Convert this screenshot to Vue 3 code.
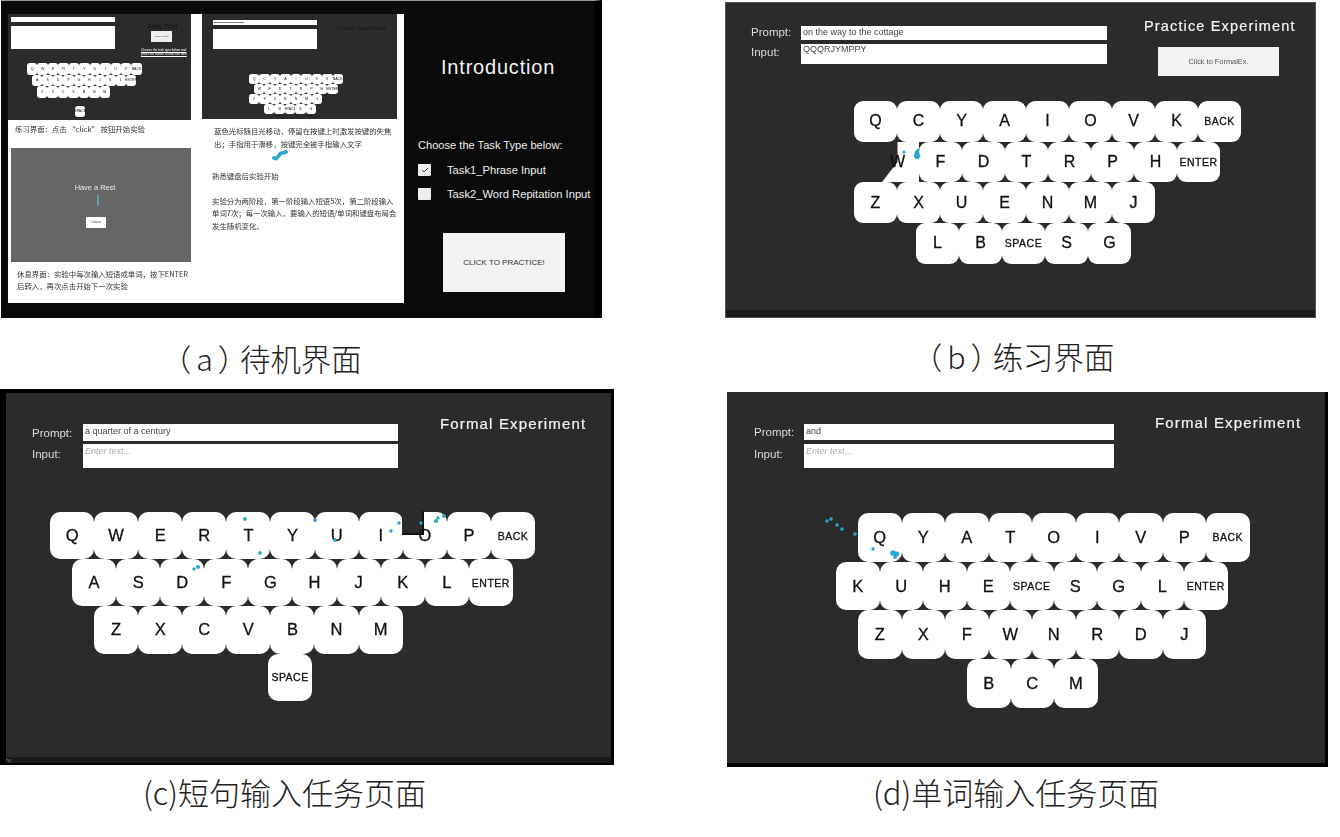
<template>
  <main class="figure">
    <!-- (a) standby screen: a slide with thumbnails next to the task picker -->
    <section class="cell cell-a">
      <div class="intro">
        <div class="doc">
          <div class="doc-left">
            <div class="mini mini-one">
              <div class="mini-head">
                <div class="mini-form">
                  <div class="mini-bar"></div>
                  <div class="mini-bar tall"></div>
                </div>
                <div class="mini-side">
                  <div class="mini-title">New Trial</div>
                  <div class="mini-btn">Click to start</div>
                  <div class="mini-note">Choose the task type below and press the button to start the next</div>
                </div>
              </div>
              <div class="kb kb-mini">
                <div v-for="(row, r) in miniOne" :key="r" class="kb-row" :style="{ marginLeft: row.offset + 'px', marginTop: row.gap + 'px' }">
                  <div v-for="k in row.keys" :key="k" class="key">{{ k }}</div>
                </div>
              </div>
            </div>
            <p class="doc-text first">练习界面：点击 “click” 按钮开始实验</p>
            <div class="rest">
              <div class="rest-title">Have a Rest</div>
              <div class="rest-dash"></div>
              <div class="rest-btn">Continue</div>
            </div>
            <p class="doc-text rest-text">休息界面：实验中每次输入短语或单词，按下ENTER后转入，再次点击开始下一次实验</p>
          </div>
          <div class="doc-right">
            <div class="mini mini-two">
              <div class="mini-head">
                <div class="mini-form">
                  <div class="mini-bar"><span class="mini-line"></span></div>
                  <div class="mini-bar tall"></div>
                </div>
                <div class="mini-side">
                  <div class="mini-title dim">Formal Experiment</div>
                </div>
              </div>
              <div class="kb kb-mini">
                <div v-for="(row, r) in miniTwo" :key="r" class="kb-row" :style="{ marginLeft: row.offset + 'px' }">
                  <div v-for="k in row.keys" :key="k" class="key">{{ k }}</div>
                </div>
              </div>
            </div>
            <p class="doc-text two">蓝色光标随目光移动，停留在按键上时激发按键的失焦出；手指用于滑移，按键完全被手指输入文字</p>
            <svg class="squiggle" width="16" height="12" viewBox="0 0 16 12">
              <path d="M2 9 C5 11 6 7 8 5 C10 3 12 4 14 3" fill="none" stroke="#2aa6d6" stroke-width="3.8" stroke-linecap="round" />
            </svg>
            <p class="doc-text">熟悉键盘后实验开始</p>
            <p class="doc-text para">实验分为两阶段，第一阶段输入短语5次，第二阶段输入单词7次；每一次输入，要输入的短语/单词和键盘布局会发生随机变化。</p>
          </div>
        </div>
        <div class="intro-side">
          <h1 class="intro-title">Introduction</h1>
          <p class="choose">Choose the Task Type below:</p>
          <label class="task"><span class="check">
            <svg width="8" height="6" viewBox="0 0 8 6"><path d="M1 3 L3 5 L7 1" fill="none" stroke="#444" stroke-width="1" /></svg>
          </span>Task1_Phrase Input</label>
          <label class="task"><span class="check off"></span>Task2_Word Repitation Input</label>
          <div class="practice">CLICK TO PRACTICE!</div>
        </div>
      </div>
      <p class="caption wide"><span class="tag">（a）</span>待机界面</p>
    </section>

    <!-- (b), (c), (d): the same keyboard screen with different layouts -->
    <section v-for="s in screens" :key="s.id" class="cell" :class="'cell-' + s.id">
      <div class="screen">
        <div class="head">
          <div class="form">
            <span class="label">Prompt:</span>
            <div class="bar prompt">{{ s.prompt }}</div>
            <span class="label label-input">Input:</span>
            <div class="bar input" :class="{ placeholder: !s.input }">{{ s.input || 'Enter text...' }}</div>
          </div>
          <div class="side">
            <div class="title">{{ s.title }}</div>
            <div v-if="s.button" class="next">{{ s.button }}</div>
          </div>
        </div>
        <div class="kb">
          <div v-for="(row, r) in s.rows" :key="r" class="kb-row" :style="{ marginLeft: row.offset + 'px' }">
            <div
              v-for="k in row.keys"
              :key="k"
              class="key"
              :class="{ word: k.length > 1, cut: s.cut === k, notch: s.notch === k }"
            ><span>{{ k }}</span></div>
          </div>
        </div>
        <svg class="gaze" :width="s.w" :height="s.h">
          <circle v-for="(d, i) in s.dots" :key="i" :cx="d[0]" :cy="d[1]" :r="d[2]" fill="#2aa6d6" />
        </svg>
        <div class="strip"><span v-if="s.status">{{ s.status }}</span></div>
      </div>
      <p class="caption" :class="{ wide: s.tag }"><span v-if="s.tag" class="tag">{{ s.tag }}</span>{{ s.caption }}</p>
    </section>
  </main>
</template>

<script setup>
const makeRows = (list) => list.map(([offset, keys, gap]) => ({ offset, keys: keys.split(' '), gap: gap || 0 }))

const miniOne = makeRows([
  [19, 'Q W E R T Y U I O P BACK'],
  [24, 'A S D F G H J K L ENTER'],
  [29, 'Z X C V B N M'],
  [67, 'SPACE', 8],
])

const miniTwo = makeRows([
  [0, 'Q C Y A I O V K BACK'],
  [5, 'W F D T R P H ENTER'],
  [0, 'Z X U E N M J'],
  [15, 'L B SPACE S G'],
])

const screens = [
  {
    id: 'b',
    w: 591,
    h: 316,
    prompt: 'on the way to the cottage',
    input: 'QQQRJYMPPY',
    title: 'Practice Experiment',
    button: 'Click to FormalEx.',
    tag: '（b）',
    caption: '练习界面',
    cut: 'W',
    rows: makeRows([
      [0, 'Q C Y A I O V K BACK'],
      [22, 'W F D T R P H ENTER'],
      [0, 'Z X U E N M J'],
      [62, 'L B SPACE S G'],
    ]),
    dots: [[179, 150, 1.6], [192, 151, 2.4], [192, 154, 3], [193, 148, 1.6]],
  },
  {
    id: 'c',
    w: 614,
    h: 376,
    prompt: 'a quarter of a century',
    input: '',
    title: 'Formal Experiment',
    caption: '(c)短句输入任务页面',
    notch: 'O',
    status: 'hy',
    rows: makeRows([
      [0, 'Q W E R T Y U I O P BACK'],
      [22, 'A S D F G H J K L ENTER'],
      [44, 'Z X C V B N M'],
      [218, 'SPACE'],
    ]),
    dots: [
      [245, 130, 1.9], [315, 131, 1.9], [260, 164, 1.9], [335, 151, 1.9], [194, 180, 1.7], [198, 178, 2.1],
      [399, 134, 1.7], [391, 142, 1.7], [421, 134, 1.7], [436, 132, 2], [438, 129, 1.7], [444, 127, 2],
    ],
  },
  {
    id: 'd',
    w: 601,
    h: 375,
    prompt: 'and',
    input: '',
    title: 'Formal Experiment',
    caption: '(d)单词输入任务页面',
    rows: makeRows([
      [22, 'Q Y A T O I V P BACK'],
      [0, 'K U H E SPACE S G L ENTER'],
      [22, 'Z X F W N R D J'],
      [131, 'B C M'],
    ]),
    dots: [
      [100, 129, 1.7], [104, 127, 1.8], [110, 133, 1.8], [115, 137, 1.8], [128, 142, 1.8], [146, 157, 1.8],
      [166, 161, 2.8], [170, 162, 2.4], [168, 165, 1.9],
    ],
  },
]
</script>

<style>
html,
body {
  margin: 0;
  background: #fff;
}
</style>

<style scoped>
.figure {
  width: 1340px;
  height: 837px;
  display: grid;
  grid-template-columns: 725px 615px;
  grid-template-rows: 389px 448px;
  overflow: hidden;
  font-family: "Liberation Sans", "Noto Sans CJK SC", sans-serif;
}

.cell {
  min-width: 0;
}

.caption {
  margin: 0;
  font-family: "Noto Sans CJK SC", sans-serif;
  font-size: 31px;
  font-weight: 300;
  line-height: 40px;
  color: #222;
  white-space: nowrap;
  font-feature-settings: "palt";
}

.caption.wide {
  font-size: 30.4px;
}

.tag {
  letter-spacing: 6px;
}

.cell-a .caption {
  margin: 20px 0 0 175px;
}

.cell-b {
  padding-top: 2px;
}

.cell-b .caption {
  margin: 18px 0 0 201px;
}

.cell-c .caption {
  margin: 7px 0 0 143px;
}

.cell-d {
  padding: 3px 0 0 2px;
}

.cell-d .caption {
  margin: 5px 0 0 146px;
}

/* panel a */
.intro {
  width: 593px;
  height: 317px;
  margin-left: 1px;
  display: flex;
  background: #0a0a0a;
  border-top: 1px solid #999;
  border-right: 8px solid #000;
}

.doc {
  width: 396px;
  height: 289px;
  margin: 13px 0 0 7px;
  flex: none;
  display: flex;
  background: #fff;
  filter: blur(0.6px);
}

.doc-left {
  width: 194px;
  flex: none;
}

.doc-right {
  width: 195px;
}

.mini {
  background: #2b2b2b;
  overflow: hidden;
}

.mini-one {
  width: 183px;
  height: 106px;
  padding-top: 3px;
  box-sizing: border-box;
}

.mini-two {
  height: 105px;
  padding-top: 6px;
  box-sizing: border-box;
}

.mini-head {
  display: flex;
  height: 46px;
}

.mini-one .mini-head {
  padding-left: 3px;
}

.mini-two .mini-head {
  padding-left: 11px;
  height: 40px;
}

.mini-form {
  width: 104px;
  flex: none;
}

.mini-bar {
  height: 5px;
  background: #fff;
  margin-bottom: 4px;
  overflow: hidden;
}

.mini-bar.tall {
  height: 23px;
}

.mini-two .mini-bar.tall {
  height: 20px;
}

.mini-line {
  display: block;
  width: 30px;
  height: 1px;
  margin: 2px 0 0 1px;
  background: #777;
}

.mini-side {
  margin-left: 26px;
  width: 46px;
}

.mini-two .mini-side {
  margin-left: 20px;
  width: 58px;
}

.mini-title {
  font-size: 7px;
  color: #111;
  margin: 6px 0 0 7px;
  white-space: nowrap;
}

.mini-title.dim {
  margin: 5px 0 0;
  font-size: 5px;
  letter-spacing: 0.4px;
  color: #111;
}

.mini-btn {
  width: 21px;
  height: 11px;
  margin: 1px 0 0 10px;
  background: #eee;
  font-size: 2.5px;
  line-height: 11px;
  text-align: center;
  white-space: nowrap;
  overflow: hidden;
  color: #444;
}

.mini-note {
  margin-top: 6px;
  font-size: 3.2px;
  line-height: 4.4px;
  text-decoration: underline;
  color: #fff;
}

.kb-row {
  display: flex;
}

.key {
  flex: none;
  box-sizing: border-box;
  position: relative;
  display: flex;
  align-items: center;
  justify-content: center;
  background: #fff;
  color: #111;
  white-space: nowrap;
}

.key span {
  position: relative;
  z-index: 1;
  -webkit-text-stroke: 0.3px #111;
}

.kb-mini .key {
  width: 10.45px;
  height: 11.5px;
  border-radius: 3px;
  font-size: 3.6px;
}

.mini-two .kb-mini {
  margin-top: 14px;
  margin-left: 47px;
}

.mini-two .kb-mini .key {
  height: 10px;
}

.doc-text {
  margin: 0;
  font-family: "Noto Sans CJK SC", sans-serif;
  font-size: 7.4px;
  line-height: 12.5px;
  color: #333;
}

.doc-text.first {
  margin: 3px 0 12px 7px;
}

.rest {
  width: 180px;
  height: 114px;
  margin-left: 3px;
  background: #666;
  display: flex;
  flex-direction: column;
  align-items: center;
}

.rest-title {
  margin: 35px 12px 0 0;
  font-size: 7.4px;
  color: #eee;
}

.rest-dash {
  width: 1.5px;
  height: 11px;
  margin: 3px 6px 0 0;
  background: #5fa0a8;
}

.rest-btn {
  width: 20px;
  height: 11px;
  margin: 11px 10px 0 0;
  background: #fff;
  font-size: 2.6px;
  line-height: 11px;
  text-align: center;
  color: #444;
}

.rest-text {
  margin: 6px 10px 0 9px;
}

.doc-right .doc-text {
  margin-left: 10px;
}

.doc-right .doc-text.two {
  margin: 6px 3px 0 12px;
}

.squiggle {
  display: block;
  margin: -1px 0 9px 70px;
}

.doc-right .doc-text.para {
  margin-top: 12px;
}

.intro-side {
  flex: 1;
  min-width: 0;
  color: #eee;
  padding-left: 14px;
}

.intro-title {
  margin: 52px 0 0 23px;
  font-size: 20px;
  font-weight: 400;
  line-height: 28px;
  letter-spacing: 0.8px;
  color: #f2f2f2;
}

.choose {
  margin: 57px 0 11px;
  font-size: 11.1px;
  line-height: 14px;
  white-space: nowrap;
}

.task {
  display: flex;
  align-items: center;
  height: 13px;
  margin-bottom: 11px;
  font-size: 11.2px;
  white-space: nowrap;
}

.check {
  width: 13px;
  height: 12px;
  margin-right: 16px;
  flex: none;
  display: flex;
  align-items: center;
  justify-content: center;
  background: #eee;
  border-radius: 1px;
}

.practice {
  width: 122px;
  height: 59px;
  margin: 33px 0 0 25px;
  background: #f2f2f2;
  color: #333;
  font-size: 8px;
  line-height: 59px;
  text-align: center;
}

/* panels b, c, d */
.screen {
  position: relative;
  box-sizing: border-box;
  display: flex;
  flex-direction: column;
  background: #2b2b2b;
  filter: blur(0.3px);
}

.head {
  display: flex;
  flex: none;
}

.form {
  display: grid;
  align-content: start;
}

.label {
  color: #ddd;
  font-size: 11.5px;
  align-self: center;
}

.label-input {
  align-self: start;
  line-height: 20px;
}

.bar {
  background: #fff;
  color: #444;
  font-size: 9px;
  padding-left: 2px;
  box-sizing: border-box;
  overflow: hidden;
}

.prompt {
  line-height: 15px;
}

.input {
  line-height: 14px;
}

.input.placeholder {
  color: #aaa;
  font-style: italic;
}

.title {
  color: #f4f4f4;
  font-weight: 400;
  white-space: nowrap;
  letter-spacing: 1.15px;
  -webkit-text-stroke: 0.2px #f4f4f4;
}

.next {
  width: 121px;
  height: 29px;
  margin: 11px 0 0 14px;
  background: #f2f2f2;
  color: #555;
  font-size: 7.4px;
  line-height: 29px;
  text-align: center;
}

.kb {
  flex: none;
}

.kb .key.word {
  font-size: 10.5px;
  letter-spacing: 0.5px;
}

.key.cut {
  background: transparent;
}

.key.cut::before {
  content: "";
  position: absolute;
  inset: 0;
  background: #fff;
  clip-path: polygon(50% 0, 100% 0, 100% 100%, 13% 100%, 50% 50%);
}

.key.notch::after {
  content: "";
  position: absolute;
  top: -1px;
  left: -1px;
  width: 50%;
  height: 50%;
  box-sizing: border-box;
  background: #2b2b2b;
  border-bottom: 2px solid #111;
  border-right: 2px solid #111;
}

.gaze {
  position: absolute;
  left: 0;
  top: 0;
  z-index: 2;
  pointer-events: none;
}

.strip {
  margin-top: auto;
  background: #1a1a1a;
  font-size: 5px;
  color: #777;
}

.cell-b .screen {
  width: 591px;
  height: 316px;
  border: 1px solid #555;
}

.cell-b .gaze {
  left: -1px;
  top: -1px;
}

.cell-b .head {
  height: 98px;
  padding: 23px 0 0 25px;
  box-sizing: border-box;
}

.cell-b .form {
  grid-template-columns: 50px 306px;
  grid-template-rows: 14px 20px;
  row-gap: 4px;
}

.cell-b .label {
  align-self: start;
  line-height: 12px;
}

.cell-b .label-input {
  line-height: 16px;
}

.cell-b .prompt {
  line-height: 13px;
}

.cell-b .input {
  line-height: 11px;
}

.cell-b .side {
  margin: -10px 0 0 37px;
}

.cell-b .title {
  font-size: 14.5px;
  line-height: 20px;
}

.cell-b .kb {
  margin-left: 128px;
}

.cell-b .key {
  width: 43px;
  height: 40.7px;
  border-radius: 9px;
  font-size: 16px;
}

.cell-b .strip {
  height: 7px;
}

.cell-c .screen {
  width: 614px;
  height: 376px;
  border: solid #000;
  border-width: 4px 3px 2px 6px;
}

.cell-c .gaze {
  left: -6px;
  top: -4px;
}

.cell-c .head {
  height: 119px;
  padding: 31px 0 0 26px;
  box-sizing: border-box;
}

.cell-c .form {
  grid-template-columns: 51px 315px;
  grid-template-rows: 17px 24px;
  row-gap: 3px;
}

.cell-d .form {
  grid-template-columns: 50px 310px;
  grid-template-rows: 16px 24px;
  row-gap: 4px;
}

.cell-c .side {
  margin: -10px 0 0 42px;
}

.cell-c .title,
.cell-d .title {
  font-size: 15px;
  line-height: 20px;
}

.cell-c .kb {
  margin-left: 44px;
}

.cell-c .key {
  width: 44.1px;
  height: 47.2px;
  border-radius: 10px;
  font-size: 16.5px;
}

.cell-c .strip {
  height: 6px;
}

.cell-d .screen {
  width: 601px;
  height: 375px;
  border: solid #000;
  border-width: 0 3px 4px 0;
}

.cell-d .head {
  height: 121px;
  padding: 32px 0 0 27px;
  box-sizing: border-box;
}

.cell-d .side {
  margin: -11px 0 0 41px;
}

.cell-d .kb {
  margin-left: 109px;
}

.cell-d .key {
  width: 43.5px;
  height: 48.7px;
  border-radius: 10px;
  font-size: 16.5px;
}

.cell-d .strip {
  height: 0;
}
</style>
